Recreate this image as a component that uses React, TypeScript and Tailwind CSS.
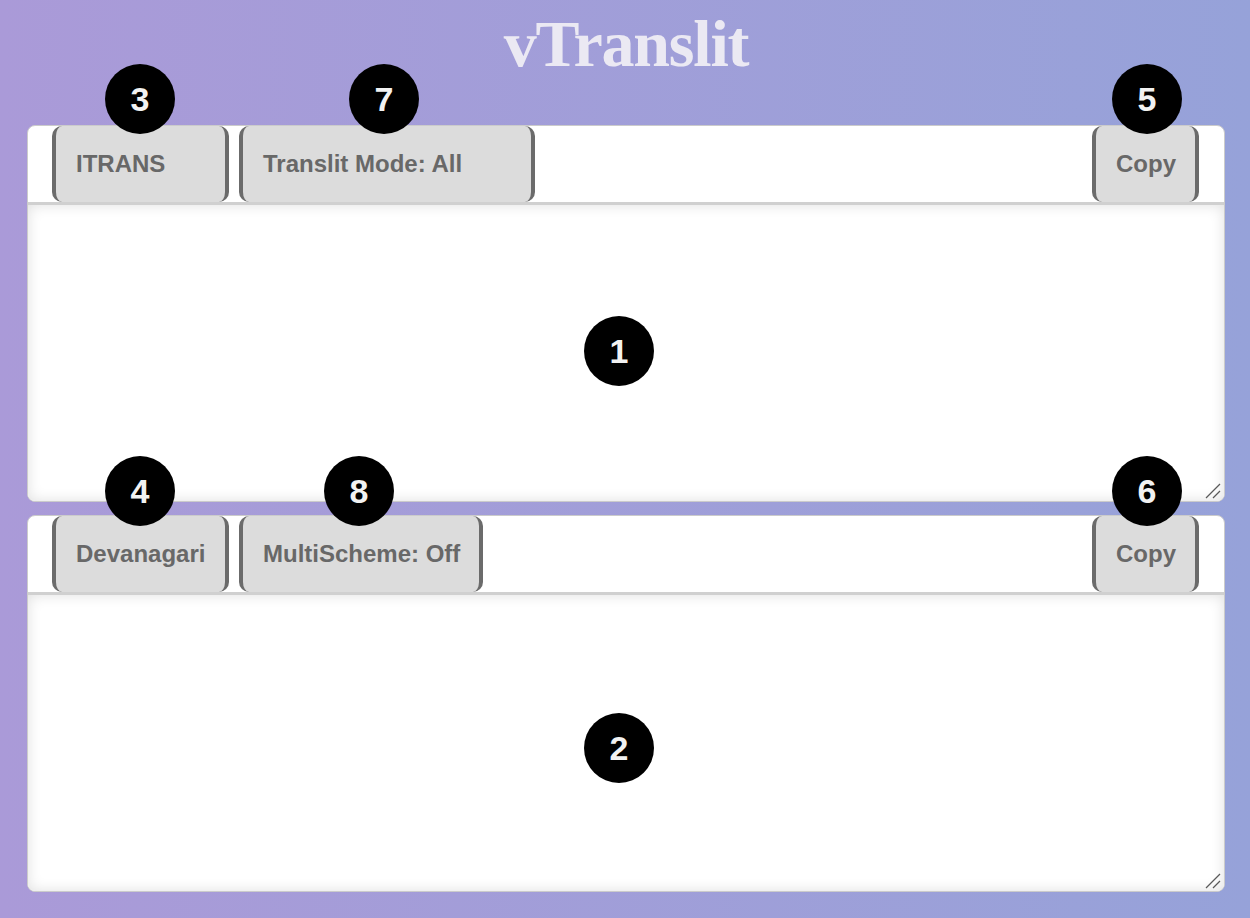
import React from 'react'

interface BadgeProps {
  n: number
  className: string
}

// numbered marker that sits over the page
function Badge({ n, className }: BadgeProps) {
  return (
    <div
      className={`absolute w-[70px] h-[70px] rounded-full bg-black text-[#f2f2f2] flex items-center justify-center text-[34px] font-bold font-['Liberation_Sans',Arial,sans-serif] leading-none ${className}`}
    >
      {n}
    </div>
  )
}

const btn =
  "h-full flex items-center justify-start whitespace-nowrap bg-[#dcdcdc] border-x-4 border-[#6b6b6b] rounded-[10px] text-[24px] font-bold text-[#686868] font-['Liberation_Sans',Arial,sans-serif] px-[20px]"

interface PanelProps {
  left: string
  middle: string
  leftWidth: string
  middleWidth: string
}

function Panel({ left, middle, leftWidth, middleWidth }: PanelProps) {
  return (
    <div className="relative bg-white border border-[#cbcbcb] rounded-[8px] overflow-hidden">
      <div className="h-[79px] flex items-stretch pl-[24px] pr-[25px] border-b-[3px] border-[#d0d0d0]">
        <div className="flex gap-[10px] h-[76px]">
          <button type="button" className={`${btn} ${leftWidth}`}>
            {left}
          </button>
          <button type="button" className={`${btn} ${middleWidth}`}>
            {middle}
          </button>
        </div>
        <div className="flex-1" />
        <button type="button" className={`${btn} h-[76px] w-[107px]`}>
          Copy
        </button>
      </div>
      <textarea
        className="block w-full h-[296px] bg-white outline-none border-none resize-none shadow-[inset_0_0_14px_rgba(0,0,0,0.13)] p-3"
        spellCheck={false}
      />
      {/* resize grip */}
      <svg className="absolute right-[3px] bottom-[2px]" width="16" height="16" viewBox="0 0 16 16">
        <line x1="15" y1="1" x2="1" y2="15" stroke="#5a5a5a" strokeWidth="1.3" />
        <line x1="15" y1="8" x2="8" y2="15" stroke="#5a5a5a" strokeWidth="1.3" />
      </svg>
    </div>
  )
}

export default function App() {
  return (
    <div className="relative min-h-screen w-full bg-linear-to-r from-[#aa9ad8] to-[#96a2d9] pl-[27px] pr-[25px] pb-[25px]">
      <div className="h-[125px] flex justify-center pt-[11px]">
        <h1 className="text-[66px] leading-none font-bold tracking-[-1.2px] text-[#ebe9f3] font-['Liberation_Serif','Times_New_Roman',serif]">
          vTranslit
        </h1>
      </div>

      <div className="flex flex-col gap-[13px]">
        <Panel left="ITRANS" middle="Translit Mode: All" leftWidth="w-[177px]" middleWidth="w-[296px]" />
        <Panel left="Devanagari" middle="MultiScheme: Off" leftWidth="w-[177px]" middleWidth="w-[244px]" />
      </div>

      <Badge n={3} className="left-[105px] top-[64px]" />
      <Badge n={7} className="left-[349px] top-[64px]" />
      <Badge n={5} className="left-[1112px] top-[64px]" />
      <Badge n={1} className="left-[584px] top-[316px]" />
      <Badge n={4} className="left-[105px] top-[456px]" />
      <Badge n={8} className="left-[324px] top-[456px]" />
      <Badge n={6} className="left-[1112px] top-[456px]" />
      <Badge n={2} className="left-[584px] top-[713px]" />
    </div>
  )
}
